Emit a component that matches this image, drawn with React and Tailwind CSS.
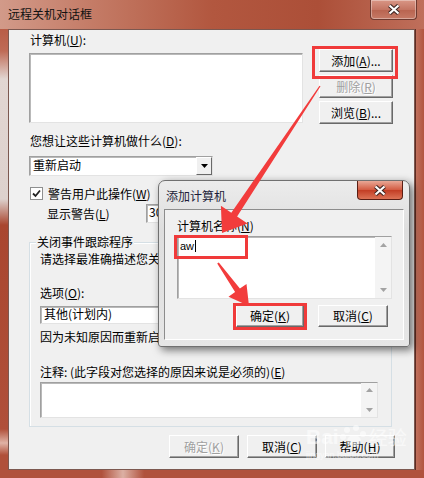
import React from "react";

const field =
  "bg-white border border-t-[#a0a0a0] border-l-[#a0a0a0] border-r-[#e3e3e3] border-b-[#e3e3e3] shadow-[inset_1px_1px_0_#b9b9b9]";

function Btn({ children, disabled, className = "" }) {
  return (
    <div
      className={`flex items-center justify-center bg-[#f0f0f0] border border-t-white border-l-white border-r-[#696969] border-b-[#696969] shadow-[inset_-1px_-1px_0_#a0a0a0] text-[12px] leading-[14px] ${
        disabled ? "text-[#a0a0a0] [text-shadow:1px_1px_0_#fff]" : "text-black"
      } ${className}`}
    >
      {children}
    </div>
  );
}

function CloseX() {
  return (
    <svg width="14" height="11" viewBox="0 0 14 11">
      <path d="M2.5 1.5 L11.5 9.5 M11.5 1.5 L2.5 9.5" stroke="#3b2522" strokeWidth="4.2" />
      <path d="M2.5 1.5 L11.5 9.5 M11.5 1.5 L2.5 9.5" stroke="#ffffff" strokeWidth="2.2" />
    </svg>
  );
}

function ScrollArrows({ className = "" }) {
  return (
    <div className={`w-[16px] flex flex-col justify-between items-center bg-[#f4f4f4] ${className}`}>
      <svg width="7" height="4" viewBox="0 0 7 4">
        <path d="M0 4 L3.5 0 L7 4 Z" fill="#a3a3a3" />
      </svg>
      <svg width="7" height="4" viewBox="0 0 7 4">
        <path d="M0 0 L3.5 4 L7 0 Z" fill="#a3a3a3" />
      </svg>
    </div>
  );
}

function U({ children }) {
  return <span className="underline underline-offset-1">{children}</span>;
}

export default function App() {
  return (
    <div className="w-[424px] h-[478px] relative overflow-hidden flex flex-col bg-[#b2563f] text-black [font-family:'Noto_Sans_CJK_SC','Liberation_Sans',sans-serif]">
      {/* title bar */}
      <div className="h-[29px] flex justify-between bg-[linear-gradient(90deg,#d29a89_0%,#c47b66_22%,#b2573f_50%,#ac4f38_75%,#bf6f5b_100%)]">
        <div className="pl-[8px] pt-[7px] text-[12px] leading-[14px] text-[#111]">远程关机对话框</div>
        <div className="mr-[7px] w-[47px] h-[20px] rounded-b-[4px] border border-t-0 border-[#6e3a30] bg-[linear-gradient(to_bottom,#d99686,#c47563_50%,#b8634f_51%,#c67a66)] shadow-[inset_0_0_0_1px_rgba(255,255,255,0.35)] flex items-center justify-center">
          <CloseX />
        </div>
      </div>

      <div className="flex flex-1">
        <div className="w-[8px] bg-[linear-gradient(to_bottom,#b85c46_0px,#bf6b56_22px,#e2d6d2_50px,#ddd1cd_170px,#a9462f_196px,#b0503a_400px,#e0b3a6_414px,#b0503a_426px)]" />

        {/* client area */}
        <div className="w-[407px] bg-[#f0f0f0] border border-[#7c5850] pl-[20px] text-[12px] leading-[14px] flex flex-col">
          <div className="flex pt-[3px]">
            <div className="flex flex-col">
              <div className="ml-[1px] h-[14px]">
                计算机(<U>U</U>):
              </div>
              <div className={`mt-[6px] w-[274px] h-[70px] ${field}`} />
            </div>
            <div className="ml-[16px] mt-[16px] flex flex-col gap-[3px]">
              <Btn className="w-[74px] h-[23px]">
                添加(<U>A</U>)...
              </Btn>
              <Btn disabled className="w-[74px] h-[23px]">
                删除(<U>R</U>)
              </Btn>
              <Btn className="w-[74px] h-[23px]">
                浏览(<U>B</U>)...
              </Btn>
            </div>
          </div>

          <div className="mt-[10px] ml-[1px] h-[14px]">
            您想让这些计算机做什么(<U>D</U>):
          </div>
          <div className={`mt-[8px] w-[184px] h-[20px] flex ${field}`}>
            <div className="flex-1 pl-[3px] pt-[1px]">重新启动</div>
            <div className="w-[16px] bg-[#f0f0f0] border border-t-white border-l-white border-r-[#696969] border-b-[#696969] flex items-center justify-center">
              <svg width="7" height="4" viewBox="0 0 7 4">
                <path d="M0 0 L3.5 4 L7 0 Z" fill="#000" />
              </svg>
            </div>
          </div>

          <div className="mt-[11px] h-[13px] flex items-center">
            <div className="ml-[1px] w-[13px] h-[13px] bg-white border border-[#8e8f8f] flex items-center justify-center">
              <svg width="9" height="9" viewBox="0 0 9 9">
                <path d="M1 4.5 L3.5 7 L8 1.5" stroke="#222" strokeWidth="1.8" fill="none" />
              </svg>
            </div>
            <div className="ml-[5px]">
              警告用户此操作(<U>W</U>)
            </div>
          </div>
          <div className="mt-[4px] h-[19px] flex items-center">
            <div className="ml-[18px] w-[99px]">
              显示警告(<U>L</U>)
            </div>
            <div className={`w-[44px] h-[19px] pl-[2px] ${field}`}>30</div>
          </div>

          <div className="mt-[19px] w-[363px] h-[185px] border border-[#d5dfe5] shadow-[inset_1px_1px_0_#fff] relative pl-[10px] pt-[9px] flex flex-col">
            <div className="absolute -top-[8px] left-[6px] px-[1px] bg-[#f0f0f0] h-[14px]">关闭事件跟踪程序</div>
            <div className="h-[14px] whitespace-nowrap">请选择最准确描述您关闭这些计算机的原因</div>
            <div className="mt-[20px] h-[14px]">
              选项(<U>O</U>):
            </div>
            <div className={`mt-[6px] w-[338px] h-[18px] pl-[3px] ${field}`}>其他(计划内)</div>
            <div className="mt-[6px] h-[14px] whitespace-nowrap">因为未知原因而重新启动</div>
            <div className="mt-[21px] h-[14px] whitespace-nowrap">
              注释: (此字段对您选择的原因来说是必须的)(<U>E</U>)
            </div>
            <div className={`mt-[3px] w-[338px] h-[36px] flex justify-end ${field}`}>
              <ScrollArrows className="py-[5px]" />
            </div>
          </div>

          <div className="mt-[8px] pr-[19px] flex justify-end gap-[8px]">
            <Btn disabled className="w-[70px] h-[23px]">
              确定(<U>K</U>)
            </Btn>
            <Btn className="w-[70px] h-[23px]">
              取消(<U>C</U>)
            </Btn>
            <Btn className="w-[70px] h-[23px]">
              帮助(<U>H</U>)
            </Btn>
          </div>
        </div>

        <div className="flex-1 border-l border-[#5e2c22] bg-[linear-gradient(90deg,#c0705c,#b2553f)]" />
      </div>
      <div className="h-[8px] bg-[linear-gradient(90deg,#b0523d_0%,#b0523d_24%,#dcb0a4_29%,#b0523d_34%,#b0523d_100%)]" />

      {/* add-computer dialog */}
      <div className="absolute left-[158px] top-[180px] w-[252px] h-[167px] rounded-t-[7px] rounded-b-[3px] border border-[#707070] bg-[linear-gradient(to_bottom,#ececec,#dedede_30%,#e6e6e6)] shadow-[3px_3px_9px_rgba(0,0,0,0.55)] flex flex-col">
        <div className="h-[28px] flex justify-between">
          <div className="pl-[7px] pt-[8px] text-[12px] leading-[14px] text-[#1d1d3a]">添加计算机</div>
          <div className="mr-[6px] w-[46px] h-[19px] rounded-b-[4px] border border-t-0 border-[#5a1e14] bg-[linear-gradient(to_bottom,#e9a896,#d35a40_50%,#c23d24_51%,#dc7356)] flex items-center justify-center">
            <CloseX />
          </div>
        </div>
        <div className="ml-[5px] w-[240px] h-[131px] bg-[#f0f0f0] border border-[#8c8c8c] border-r-white border-b-white text-[12px] leading-[14px] flex flex-col pl-[12px]">
          <div className="mt-[9px] h-[14px]">
            计算机名称(<U>N</U>)
          </div>
          <div className={`mt-[3px] w-[215px] h-[63px] flex ${field}`}>
            <div className="flex-1 pl-[2px] pt-[3px] flex items-start">
              <span className="text-[11px] leading-[13px] [font-family:'Liberation_Sans',sans-serif]">aw</span>
              <span className="w-px h-[12px] bg-black ml-[1px]" />
            </div>
            <ScrollArrows className="py-[6px]" />
          </div>
          <div className="mt-[6px] flex">
            <Btn className="ml-[59px] w-[68px] h-[22px]">
              确定(<U>K</U>)
            </Btn>
            <Btn className="ml-[14px] w-[70px] h-[22px]">
              取消(<U>C</U>)
            </Btn>
          </div>
        </div>
      </div>

      {/* annotations */}
      <div className="absolute left-[312px] top-[46px] w-[86px] h-[33px] border-[3px] border-[#f03a3a]" />
      <div className="absolute left-[174px] top-[235px] w-[74px] h-[24px] border-[3px] border-[#f03a3a]" />
      <div className="absolute left-[233px] top-[303px] w-[74px] h-[27px] border-[3px] border-[#f03a3a]" />
      <svg className="absolute left-0 top-0 pointer-events-none" width="424" height="478" viewBox="0 0 424 478">
        <polygon
          points="320.5,86.3 237.1,216.6 247.5,223.6 222,233 220.9,205.8 231.3,212.8 319.5,85.7"
          fill="#f23c3c"
        />
        <polygon
          points="218.8,262.4 239.9,288.6 246.5,283.9 249,306 228.5,296.7 235.1,292 217.2,263.6"
          fill="#f23c3c"
        />
      </svg>

      {/* watermark */}
      <div className="absolute left-[306px] top-[424px] pointer-events-none text-white/55 flex flex-col">
        <div className="flex items-end">
          <span className="text-[21px] leading-[26px] font-bold [font-family:'Liberation_Sans',sans-serif]">Bai</span>
          <svg width="30" height="24" viewBox="0 0 30 24" className="mb-[2px]">
            <circle cx="8" cy="6" r="3" fill="rgba(255,255,255,0.55)" />
            <circle cx="17" cy="4" r="3" fill="rgba(255,255,255,0.55)" />
            <circle cx="24" cy="10" r="3" fill="rgba(255,255,255,0.55)" />
            <circle cx="4" cy="13" r="3" fill="rgba(255,255,255,0.55)" />
            <ellipse cx="15" cy="17" rx="7" ry="6" fill="rgba(255,255,255,0.55)" />
          </svg>
          <span className="text-[19px] leading-[26px]">经验</span>
        </div>
        <div className="text-[9px] leading-[10px] [font-family:'Liberation_Sans',sans-serif]">jingyan.baidu.com</div>
      </div>
    </div>
  );
}
